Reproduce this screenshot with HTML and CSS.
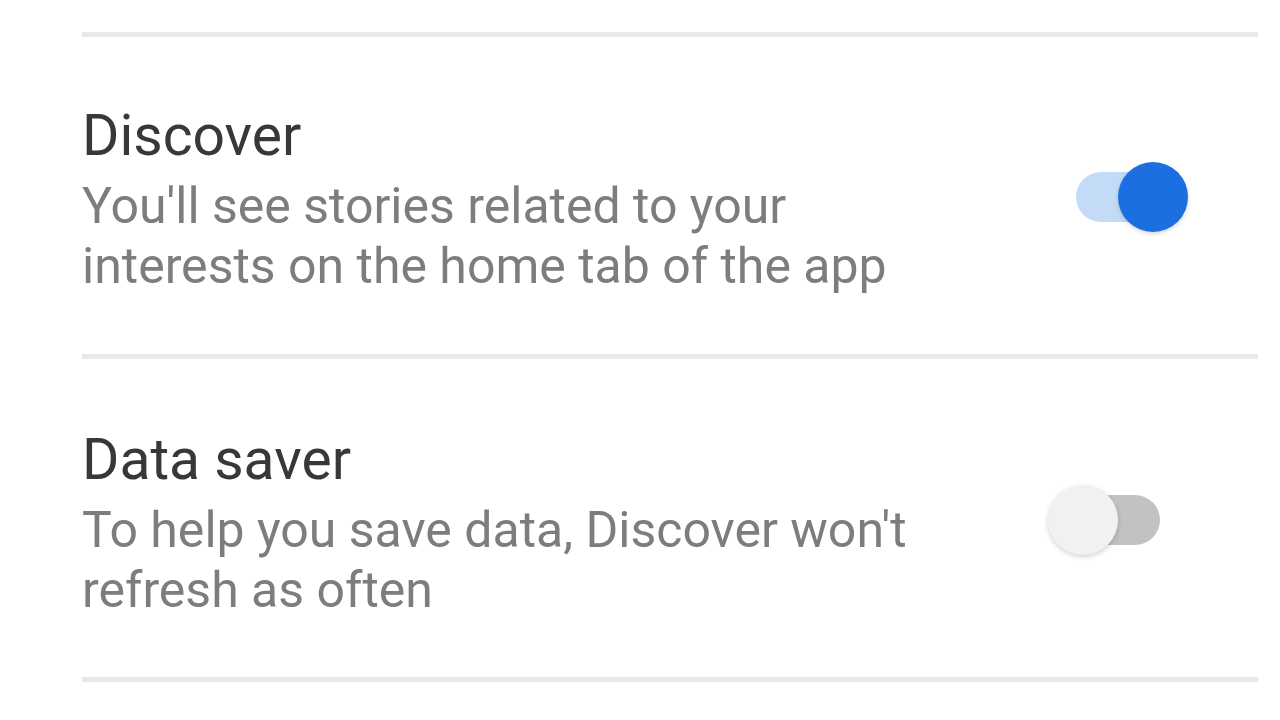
FILE: index.html
```html
<!DOCTYPE html>
<html lang="en">
<head>
  <meta charset="UTF-8" />
  <meta name="viewport" content="width=device-width, initial-scale=1.0" />
  <title>Settings</title>
  <link rel="stylesheet" href="styles.css">
</head>
<body>
  <div class="settings">
    <div class="divider"></div>

    <div class="row row-discover">
      <div class="text">
        <div class="title">Discover</div>
        <div class="desc">You'll see stories related to your<br>interests on the home tab of the app</div>
      </div>
      <div class="switch on">
        <div class="track"></div>
        <div class="thumb"></div>
      </div>
    </div>

    <div class="divider"></div>

    <div class="row row-saver">
      <div class="text">
        <div class="title">Data saver</div>
        <div class="desc">To help you save data, Discover won't<br>refresh as often</div>
      </div>
      <div class="switch off">
        <div class="track"></div>
        <div class="thumb"></div>
      </div>
    </div>

    <div class="divider"></div>
  </div>
</body>
</html>
```

FILE: styles.css
```css
body {
  margin: 0;
  background: #fff;
  font-family: Roboto, "Liberation Sans", Arial, sans-serif;
  height: 720px;
  overflow: hidden;
}
.settings {
  padding: 32px 22px 0 82px;
}
.divider {
  height: 5px;
  background: #e9e9e9;
}
.row {
  display: flex;
  align-items: center;
  justify-content: space-between;
  padding: 67px 0 58px;
}
.row-saver {
  padding: 69px 0 57px;
}
.title {
  font-size: 57px;
  line-height: 64px;
  color: #383838;
}
.desc {
  margin-top: 8px;
  font-size: 50px;
  line-height: 60px;
  color: #7d7d7d;
}
.switch {
  position: relative;
  width: 112px;
  height: 70px;
  flex-shrink: 0;
}
.row-discover .switch { margin-right: 70px; margin-bottom: 6px; }
.row-saver .switch { margin-right: 98px; margin-bottom: 8px; }
.track {
  position: absolute;
  top: 10px;
  width: 98px;
  height: 50px;
  border-radius: 25px;
}
.thumb {
  position: absolute;
  top: 0;
  width: 70px;
  height: 70px;
  border-radius: 50%;
}
.switch.on .track { left: 0; background: #c4dbf7; }
.switch.on .thumb { right: 0; background: #1b6fe0; box-shadow: 0 2px 4px rgba(0, 0, 0, 0.15); }
.switch.off .track { right: 0; background: #c2c2c2; }
.switch.off .thumb { left: 0; background: #f1f1f1; box-shadow: 0 2px 5px rgba(0, 0, 0, 0.18); }
```
